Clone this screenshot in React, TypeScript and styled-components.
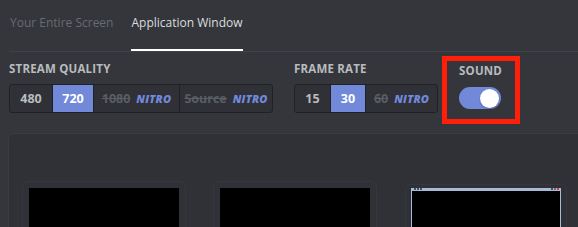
import React from 'react';
import styled, { createGlobalStyle } from 'styled-components';

const GlobalStyle = createGlobalStyle`
  html, body {
    margin: 0;
    padding: 0;
    background: #34363c;
    overflow: hidden;
  }
  body {
    font-family: "Open Sans", "Noto Sans", sans-serif;
    -webkit-font-smoothing: antialiased;
  }
`;

const Screen = styled.div`
  width: 578px;
  height: 227px;
  overflow: hidden;
  background: #34363c;
`;

const TabBar = styled.div`
  display: flex;
  gap: 18px;
  margin-left: 9px;
  padding-left: 1px;
  border-bottom: 1px solid #3f4248;
`;

const Tab = styled.div<{ $active?: boolean }>`
  padding: 14px 0 17px;
  font-size: 12px;
  line-height: 18px;
  color: ${(p) => (p.$active ? '#dcddde' : '#686b71')};
  border-bottom: 2px solid ${(p) => (p.$active ? '#ffffff' : 'transparent')};
  white-space: nowrap;
`;

const SettingsRow = styled.div`
  display: flex;
  align-items: flex-start;
  gap: 21px;
  padding: 9px 0 0 9px;
  height: 81px;
  box-sizing: border-box;
`;

const Section = styled.div`
  display: flex;
  flex-direction: column;
  gap: 8px;
`;

const SoundSection = styled(Section)`
  position: relative;
  padding-top: 2px;
  gap: 9px;
`;

const Label = styled.div`
  font-size: 11.5px;
  line-height: 15px;
  font-weight: 700;
  color: #b9bbbe;
  letter-spacing: 0.2px;
  text-transform: uppercase;
`;

const Group = styled.div`
  display: flex;
  height: 29px;
  box-sizing: border-box;
  border: 1px solid #1f2125;
  border-radius: 3px;
  background: #2f3136;
  overflow: hidden;
`;

const Cell = styled.div<{ $active?: boolean; $w: number }>`
  display: flex;
  align-items: center;
  justify-content: center;
  gap: 6px;
  width: ${(p) => p.$w}px;
  font-size: 12.5px;
  font-weight: 700;
  color: ${(p) => (p.$active ? '#ffffff' : '#b9bbbe')};
  background: ${(p) => (p.$active ? '#7289da' : 'transparent')};
  & + & {
    border-left: 1px solid ${(p) => (p.$active ? '#7289da' : '#1f2125')};
  }
`;

const Locked = styled.span`
  color: #5a5d63;
  text-decoration: line-through;
`;

const Nitro = styled.span`
  color: #7289da;
  font-style: italic;
  font-weight: 800;
  font-size: 11px;
  letter-spacing: 0.2px;
`;

const Toggle = styled.div<{ $on?: boolean }>`
  display: flex;
  align-items: center;
  justify-content: ${(p) => (p.$on ? 'flex-end' : 'flex-start')};
  width: 42px;
  height: 22px;
  padding: 0 2px;
  box-sizing: border-box;
  border-radius: 11px;
  background: ${(p) => (p.$on ? '#7289da' : '#72767d')};
`;

const Knob = styled.div`
  width: 19px;
  height: 19px;
  border-radius: 50%;
  background: #ffffff;
  box-shadow: 0 1px 2px rgba(0, 0, 0, 0.25);
`;

const Highlight = styled.div`
  position: absolute;
  top: -5px;
  left: -17px;
  right: -18px;
  bottom: -15px;
  border: 5px solid #ff1f0a;
  pointer-events: none;
`;

const Panel = styled.div`
  margin: 0 0 0 8px;
  height: 120px;
  box-sizing: border-box;
  border: 1px solid #3a3c42;
  border-right: none;
  border-radius: 5px 0 0 0;
  background: #2f3136;
  padding: 54px 0 0 20px;
`;

const Grid = styled.div`
  display: flex;
  gap: 41px;
`;

const Thumb = styled.div<{ $window?: boolean }>`
  position: relative;
  width: 150px;
  height: 60px;
  background: #000000;
  box-sizing: border-box;
  border: ${(p) => (p.$window ? '1px solid #a8bbd6' : 'none')};
  border-top-width: ${(p) => (p.$window ? '3px' : '0')};
  &::before {
    content: '';
    position: absolute;
    inset: -7px;
    border: 1px solid rgba(255, 255, 255, 0.03);
    border-radius: 6px;
  }
`;

const TitleDots = styled.div<{ $side: 'left' | 'right' }>`
  position: absolute;
  top: -3px;
  ${(p) => (p.$side === 'left' ? 'left: 2px;' : 'right: 1px;')}
  display: flex;
  gap: 1px;
  height: 2px;
`;

const Dot = styled.span<{ $c: string }>`
  width: 2px;
  height: 2px;
  background: ${(p) => p.$c};
`;

export default function App() {
  return (
    <Screen>
      <GlobalStyle />
      <TabBar>
        <Tab>Your Entire Screen</Tab>
        <Tab $active>Application Window</Tab>
      </TabBar>
      <SettingsRow>
        <Section>
          <Label>Stream Quality</Label>
          <Group>
            <Cell $w={42}>480</Cell>
            <Cell $w={40} $active>720</Cell>
            <Cell $w={85}>
              <Locked>1080</Locked>
              <Nitro>NITRO</Nitro>
            </Cell>
            <Cell $w={92}>
              <Locked>Source</Locked>
              <Nitro>NITRO</Nitro>
            </Cell>
          </Group>
        </Section>
        <Section>
          <Label>Frame Rate</Label>
          <Group>
            <Cell $w={35}>15</Cell>
            <Cell $w={34} $active>30</Cell>
            <Cell $w={71}>
              <Locked>60</Locked>
              <Nitro>NITRO</Nitro>
            </Cell>
          </Group>
        </Section>
        <SoundSection>
          <Label>Sound</Label>
          <Toggle $on>
            <Knob />
          </Toggle>
          <Highlight />
        </SoundSection>
      </SettingsRow>
      <Panel>
        <Grid>
          <Thumb />
          <Thumb />
          <Thumb $window>
            <TitleDots $side="left">
              <Dot $c="#4a5060" />
              <Dot $c="#4a5060" />
              <Dot $c="#4a5060" />
            </TitleDots>
            <TitleDots $side="right">
              <Dot $c="#4a5060" />
              <Dot $c="#6a7080" />
              <Dot $c="#e0402a" />
            </TitleDots>
          </Thumb>
        </Grid>
      </Panel>
    </Screen>
  );
}
